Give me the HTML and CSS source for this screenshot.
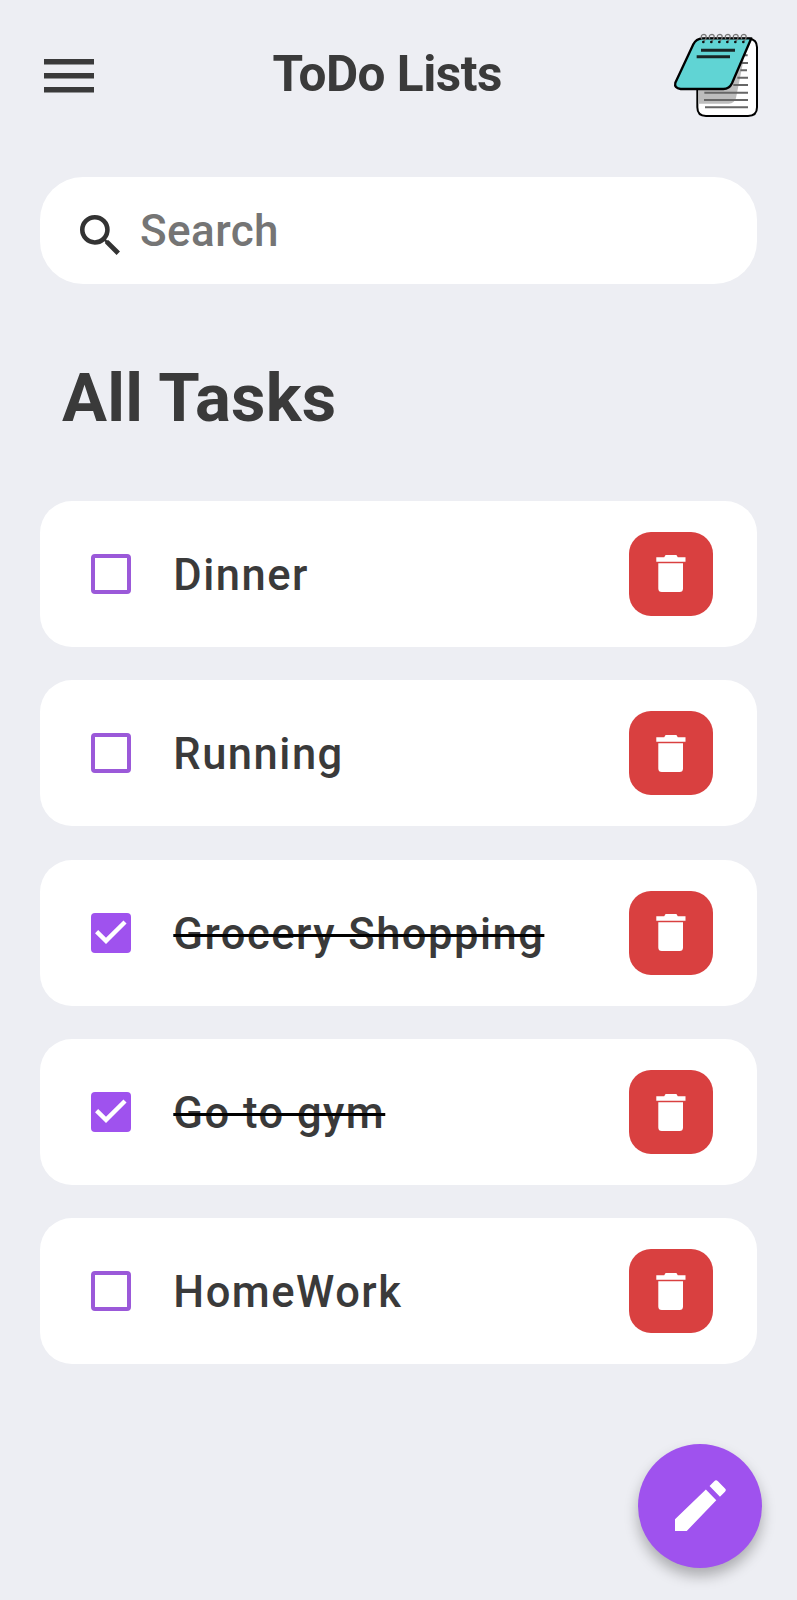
FILE: index.html
```html
<!DOCTYPE html>
<html lang="en">
<head>
<meta charset="utf-8">
<title>ToDo Lists</title>
<link rel="stylesheet" href="styles.css">
</head>
<body>
<svg class="defs" width="0" height="0" aria-hidden="true">
  <symbol id="trash" viewBox="0 0 30 37">
    <path d="M0.3 2.2H8.2L9.6 0H20.4L21.8 2.2H29.5V6.8H0.3ZM2.3 8.2H27V33.5Q27 37 23.5 37H5.8Q2.3 37 2.3 33.5Z" fill="#fff"/>
  </symbol>
  <symbol id="check" viewBox="0 0 40 40">
    <path d="M5.6 18.6L15 27.8L34 9" fill="none" stroke="#fff" stroke-width="4.4"/>
  </symbol>
</svg>
<main class="screen">
  <header class="topbar">
    <svg class="menu" viewBox="0 0 50 34"><path d="M0 0H50V5.6H0ZM0 14H50V19.6H0ZM0 28H50V33.6H0Z" fill="#3a3a3a"/></svg>
    <h1 class="title">ToDo Lists</h1>
    <svg class="notebook" viewBox="0 0 330 330">
      <path d="M135 56H268Q291 58 291 82V262Q291 288 264 288H138Q112 288 112 262V200Z" fill="#fff" stroke="#000" stroke-width="6"/>
      <path d="M115 205V251H206Q224 250 228 234L251 118L230 150L205 205Z" fill="#bdbdbd"/>
      <path d="M250 106H263M246 129H264M241 151H261M232 173H264M220 195H264M133 218H264M132 240H264M135 262H264" stroke="#666" stroke-width="6"/>
      <path d="M128 55H274L216 190Q208 207 190 207H62Q42 205 46 188L100 73Q108 56 128 55Z" fill="#60d4d4" stroke="#000" stroke-width="7" stroke-linejoin="round"/>
      <path d="M123 91H225M110 110H210" stroke="#182626" stroke-width="9"/>
      <g fill="none" stroke="#777" stroke-width="4">
        <path id="ring" d="M125 58Q121 43 132 43Q140 44 138 54Q137 61 130 64"/>
        <use href="#ring" x="24"/><use href="#ring" x="48"/><use href="#ring" x="72"/><use href="#ring" x="96"/><use href="#ring" x="120"/>
      </g>
      <g fill="#111"><circle cx="130" cy="66" r="4"/><circle cx="154" cy="66" r="4"/><circle cx="178" cy="66" r="4"/><circle cx="202" cy="66" r="4"/><circle cx="226" cy="66" r="4"/><circle cx="250" cy="66" r="4"/></g>
    </svg>
  </header>
  <label class="search">
    <svg class="search-icon" viewBox="3 3 17.5 17.5"><path d="M15.5 14h-.79l-.28-.27A6.471 6.471 0 0 0 16 9.5 6.5 6.5 0 1 0 9.5 16c1.61 0 3.09-.59 4.23-1.57l.27.28v.79l5 4.99L20.49 19l-4.99-5zm-6 0C7.01 14 5 11.99 5 9.5S7.01 5 9.5 5 14 7.01 14 9.5 11.99 14 9.5 14z" fill="#333"/></svg>
    <span class="placeholder">Search</span>
  </label>
  <h2 class="heading">All Tasks</h2>
  <ul class="tasks">
    <li class="task"><span class="box"></span><span class="name">Dinner</span><button class="delete" aria-label="Delete"><svg class="trash"><use href="#trash"/></svg></button></li>
    <li class="task"><span class="box"></span><span class="name">Running</span><button class="delete" aria-label="Delete"><svg class="trash"><use href="#trash"/></svg></button></li>
    <li class="task done"><span class="box"><svg class="check"><use href="#check"/></svg></span><span class="name">Grocery Shopping</span><button class="delete" aria-label="Delete"><svg class="trash"><use href="#trash"/></svg></button></li>
    <li class="task done"><span class="box"><svg class="check"><use href="#check"/></svg></span><span class="name">Go to gym</span><button class="delete" aria-label="Delete"><svg class="trash"><use href="#trash"/></svg></button></li>
    <li class="task"><span class="box"></span><span class="name">HomeWork</span><button class="delete" aria-label="Delete"><svg class="trash"><use href="#trash"/></svg></button></li>
  </ul>
  <button class="fab" aria-label="Add task">
    <svg class="pencil" viewBox="0 0 152 152"><path d="M0 117L92 28L123 60L35 152H0ZM103 18L117 4Q122 -2 128 4L149 25Q154 30 149 35L134 50Z" fill="#fff"/></svg>
  </button>
</main>
</body>
</html>
```
FILE: styles.css
```css
* { box-sizing: border-box; }
body { margin: 0; background: #edeef3; font-family: Roboto, "Liberation Sans", sans-serif; color: #3a3a3a; }
.defs { position: absolute; }
button { border: 0; padding: 0; display: grid; place-items: center; }
.screen { height: 1600px; padding: 0 40px; display: flex; flex-direction: column; overflow: hidden; }
.topbar { height: 177px; padding-top: 20px; display: flex; align-items: flex-start; margin-right: -13px; }
.menu { width: 50px; height: 34px; margin: 38.5px 0 0 3.5px; }
.title { margin: 24px 0 0 179px; font-size: 49.5px; line-height: 60px; font-weight: 700; letter-spacing: -0.5px; white-space: nowrap; }
.notebook { width: 110px; height: 110px; margin-left: auto; }
.search { flex: none; height: 106.5px; border-radius: 43px; background: #fff; display: flex; align-items: center; padding-left: 40px; }
.search-icon { width: 40px; height: 40px; margin-top: 9px; }
.placeholder { margin: 2px 0 0 20px; font-size: 44px; line-height: 52px; font-weight: 500; letter-spacing: 0.4px; color: #757575; }
.heading { margin: 74.5px 0 0 22px; font-size: 67px; line-height: 80px; font-weight: 700; letter-spacing: 0.2px; }
.tasks { list-style: none; margin: 62.8px 0 0; padding: 0; display: flex; flex-direction: column; gap: 33.2px; }
.task { height: 146.2px; border-radius: 32px; background: #fff; display: flex; align-items: center; padding: 0 44px 0 51px; }
.box { width: 40px; height: 40px; border: 4px solid #9b59d9; border-radius: 4px; flex: none; }
.done .box { border: 0; background: #9f52ee; }
.check { display: block; width: 40px; height: 40px; }
.name { margin: 4px 0 0 42.3px; font-size: 43.5px; line-height: 52px; font-weight: 500; letter-spacing: 1.5px; white-space: nowrap; }
.done .name { text-decoration: line-through #000 2.5px; }
.delete { margin-left: auto; width: 84px; height: 84px; border-radius: 22px; background: #d94040; }
.trash { width: 30px; height: 37px; }
.fab { flex: none; align-self: flex-end; margin: 79.2px -5px 0 0; width: 124px; height: 124px; border-radius: 50%; background: #9f52ee; box-shadow: 0 8px 14px rgba(0, 0, 0, .28); }
.pencil { width: 51px; height: 51px; }
```
